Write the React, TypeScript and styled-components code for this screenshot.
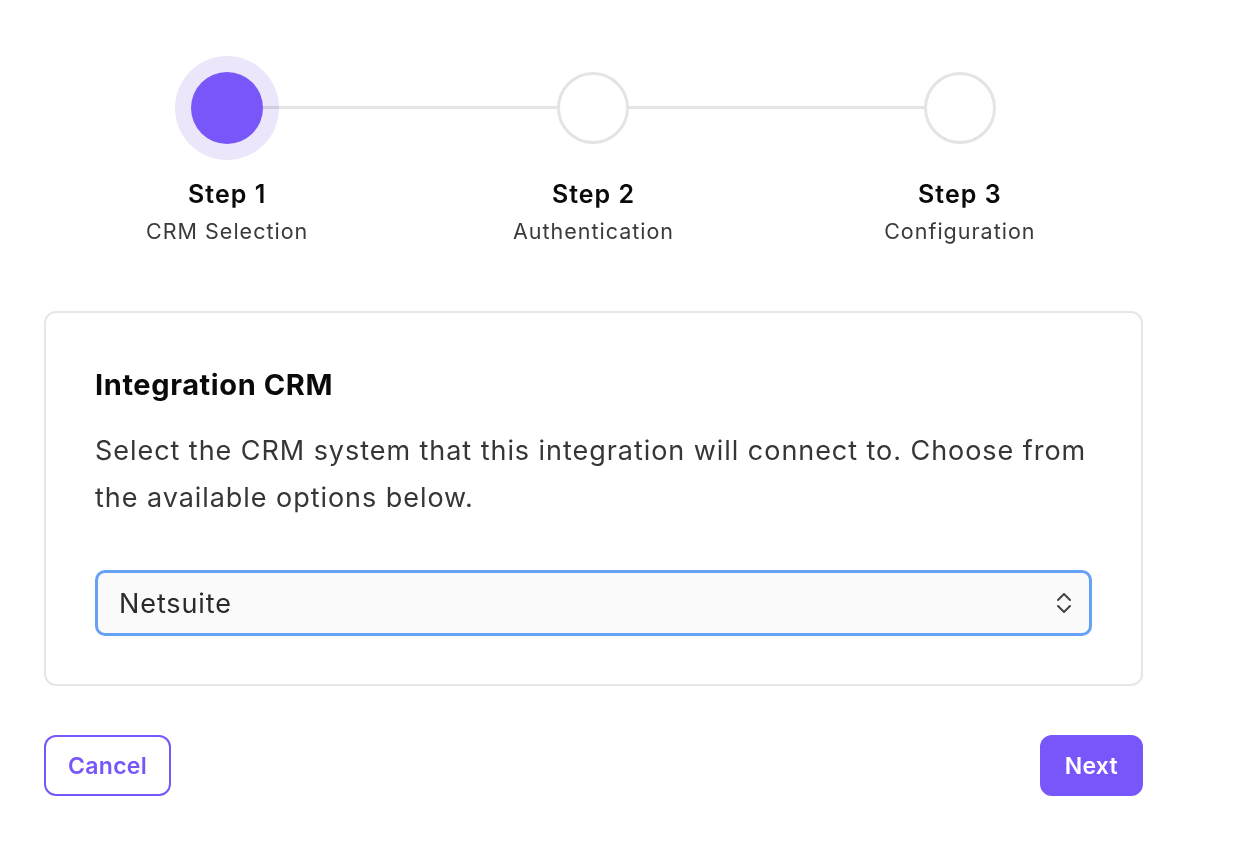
import React from "react";
import styled, { createGlobalStyle } from "styled-components";

const GlobalStyle = createGlobalStyle`
  body {
    margin: 0;
    background: #ffffff;
    font-family: "Inter", "Liberation Sans", sans-serif;
    color: #111;
  }
`;

const Page = styled.div`
  width: 1099px;
  padding: 56px 44px 60px;
`;

const Stepper = styled.ol`
  display: grid;
  grid-template-columns: repeat(3, 1fr);
  margin: 0;
  padding: 0;
  list-style: none;
`;

const Step = styled.li`
  position: relative;
  display: flex;
  flex-direction: column;
  align-items: center;

  &:not(:last-child)::after {
    content: "";
    position: absolute;
    top: 50px;
    left: calc(50% + 34px);
    width: calc(100% - 68px);
    height: 3px;
    background: #e4e4e4;
    mix-blend-mode: multiply;
    z-index: 1;
  }
`;

const Halo = styled.div<{ $active?: boolean }>`
  width: 104px;
  height: 104px;
  border-radius: 50%;
  display: flex;
  align-items: center;
  justify-content: center;
  background: ${(p) => (p.$active ? "#ebe6f9" : "transparent")};
`;

const Circle = styled.div<{ $active?: boolean }>`
  position: relative;
  z-index: 2;
  box-sizing: border-box;
  width: 72px;
  height: 72px;
  border-radius: 50%;
  background: ${(p) => (p.$active ? "#7856fa" : "#ffffff")};
  border: ${(p) => (p.$active ? "none" : "3px solid #e4e4e4")};
`;

const StepTitle = styled.div`
  margin-top: 19px;
  font-size: 25px;
  line-height: 30px;
  font-weight: 600;
  letter-spacing: 1px;
  color: #0a0a0a;
`;

const StepSub = styled.div`
  margin-top: 8px;
  font-size: 21.5px;
  line-height: 28px;
  letter-spacing: 1px;
  color: #3a3a3a;
`;

const Card = styled.section`
  margin-top: 66px;
  border: 2px solid #e6e6e6;
  border-radius: 12px;
  padding: 56px 49px 48px;
`;

const CardTitle = styled.h2`
  margin: 0;
  font-size: 29px;
  line-height: 32px;
  font-weight: 700;
  letter-spacing: 0.6px;
  color: #0a0a0a;
`;

const CardText = styled.p`
  margin: 26px 0 0;
  font-size: 27px;
  line-height: 47px;
  letter-spacing: 0.95px;
  color: #363636;
`;

const SelectWrap = styled.div`
  position: relative;
  margin-top: 49px;
`;

const Select = styled.select`
  display: block;
  appearance: none;
  width: 100%;
  height: 66px;
  box-sizing: border-box;
  border: 3px solid #66a1f6;
  border-radius: 10px;
  background: #fafafa;
  padding: 0 60px 0 21px;
  font-family: "Inter", "Liberation Sans", sans-serif;
  font-size: 27px;
  letter-spacing: 0.9px;
  color: #2a2a2a;
  outline: none;
`;

const Chevron = styled.svg`
  position: absolute;
  right: 20px;
  top: 50%;
  transform: translateY(-50%);
  pointer-events: none;
`;

const Actions = styled.div`
  display: flex;
  justify-content: space-between;
  margin-top: 49px;
`;

const Button = styled.button<{ $primary?: boolean }>`
  height: 61px;
  box-sizing: border-box;
  padding: 0 ${(p) => (p.$primary ? "23px" : "22px")};
  border-radius: 12px;
  border: 2px solid #7856fa;
  background: ${(p) => (p.$primary ? "#7856fa" : "#ffffff")};
  color: ${(p) => (p.$primary ? "#ffffff" : "#7856fa")};
  font-family: "Inter", "Liberation Sans", sans-serif;
  font-size: 23px;
  font-weight: 600;
  letter-spacing: 0.3px;
  cursor: pointer;
`;

const steps = [
  { title: "Step 1", sub: "CRM Selection" },
  { title: "Step 2", sub: "Authentication" },
  { title: "Step 3", sub: "Configuration" },
];

export default function App() {
  return (
    <>
      <GlobalStyle />
      <Page>
        <Stepper>
          {steps.map((s, i) => (
            <Step key={s.title}>
              <Halo $active={i === 0}>
                <Circle $active={i === 0} />
              </Halo>
              <StepTitle>{s.title}</StepTitle>
              <StepSub>{s.sub}</StepSub>
            </Step>
          ))}
        </Stepper>

        <Card>
          <CardTitle>Integration CRM</CardTitle>
          <CardText>
            Select the CRM system that this integration will connect to. Choose from the available
            options below.
          </CardText>
          <SelectWrap>
            <Select defaultValue="netsuite">
              <option value="netsuite">Netsuite</option>
              <option value="salesforce">Salesforce</option>
              <option value="hubspot">HubSpot</option>
            </Select>
            <Chevron width="16" height="24" viewBox="0 0 16 24" fill="none">
              <path d="M2 9 L8 3 L14 9" stroke="#444" strokeWidth="2" strokeLinecap="round" strokeLinejoin="round" />
              <path d="M2 15 L8 21 L14 15" stroke="#444" strokeWidth="2" strokeLinecap="round" strokeLinejoin="round" />
            </Chevron>
          </SelectWrap>
        </Card>

        <Actions>
          <Button>Cancel</Button>
          <Button $primary>Next</Button>
        </Actions>
      </Page>
    </>
  );
}
